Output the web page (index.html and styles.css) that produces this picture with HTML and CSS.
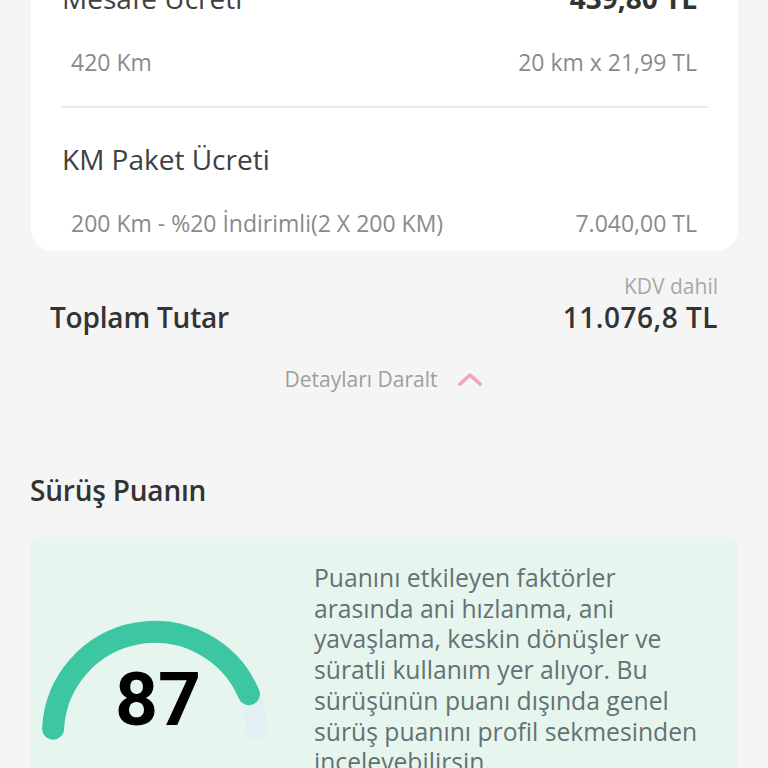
FILE: index.html
```html
<!DOCTYPE html>
<html lang="tr">
<head>
    <meta charset="UTF-8">
    <meta name="viewport" content="width=device-width, initial-scale=1.0">
    <title>Kiralama Özeti</title>
    <link rel="stylesheet" href="styles.css">
</head>
<body>
    <div class="page">
        <div class="fee-card">
            <div class="fee">
                <div class="fee-title">
                    <span>Mesafe Ücreti</span>
                    <span class="fee-amount">439,80 TL</span>
                </div>
                <div class="fee-sub">
                    <span>420 Km</span>
                    <span>20 km x 21,99 TL</span>
                </div>
            </div>
            <div class="fee-divider"></div>
            <div class="fee">
                <div class="fee-title">
                    <span>KM Paket Ücreti</span>
                </div>
                <div class="fee-sub">
                    <span>200 Km - %20 İndirimli(2 X 200 KM)</span>
                    <span>7.040,00 TL</span>
                </div>
            </div>
        </div>

        <div class="total">
            <div class="total-note">KDV dahil</div>
            <div class="total-row">
                <span>Toplam Tutar</span>
                <span class="total-amount">11.076,8 TL</span>
            </div>
        </div>

        <div class="collapse">
            <span>Detayları Daralt</span>
            <svg class="chevron" width="26" height="14" viewBox="0 0 26 14">
                <path d="M3 12 L13 3 L23 12" fill="none" stroke="#f2a3b6" stroke-width="3.5" stroke-linecap="round" stroke-linejoin="round"/>
            </svg>
        </div>

        <h2 class="section-title">Sürüş Puanın</h2>

        <div class="score-card">
            <svg class="gauge" width="284" height="232" viewBox="0 0 284 232">
                <path d="M23.1 191.7 A102 102 0 0 1 226.9 191.7" fill="none" stroke="#e3eff0" stroke-width="22" stroke-linecap="round"/>
                <path d="M23.1 191.7 A102 102 0 0 1 218.9 157.1" fill="none" stroke="#3cc6a2" stroke-width="22" stroke-linecap="round"/>
                <text x="128" y="188" text-anchor="middle" class="gauge-value">87</text>
            </svg>
            <p class="score-text">Puanını etkileyen faktörler arasında ani hızlanma, ani yavaşlama, keskin dönüşler ve süratli kullanım yer alıyor. Bu sürüşünün puanı dışında genel sürüş puanını profil sekmesinden incelevebilirsin.</p>
        </div>
    </div>
</body>
</html>
```

FILE: styles.css
```css
body {
    margin: 0;
    background-color: #f5f5f5;
    font-family: 'Open Sans', 'Noto Sans', sans-serif;
    color: #3a3a3a;
    height: 768px;
    overflow: hidden;
}
.page {
    padding: 0 30px;
}
.fee-card {
    background-color: #fff;
    border-radius: 0 0 22px 22px;
    margin: -53px 0 0 1px;
}
.fee {
    padding: 34px 30px 14px;
}
.fee-title {
    display: flex;
    justify-content: space-between;
    font-size: 28px;
    line-height: 34px;
    padding: 0 11px 0 1px;
    margin-bottom: 33px;
    color: #404040;
}
.fee-amount {
    font-weight: 700;
    color: #333;
}
.fee-sub {
    display: flex;
    justify-content: space-between;
    font-size: 23px;
    line-height: 28px;
    color: #8a8a8a;
    padding: 0 11px 0 10px;
}
.fee-divider {
    height: 2px;
    background-color: #e9ebeb;
    margin: 16px 30px 0;
}
.total {
    padding: 22px 20px 0;
}
.total-note {
    text-align: right;
    font-size: 21px;
    line-height: 26px;
    color: #a8a8a8;
}
.total-row {
    display: flex;
    justify-content: space-between;
    font-size: 28px;
    line-height: 36px;
    font-weight: 600;
    color: #333;
    letter-spacing: -0.2px;
}
.total-amount {
    letter-spacing: 0.5px;
}
.collapse {
    display: flex;
    justify-content: center;
    align-items: center;
    gap: 20px;
    margin-top: 31px;
    font-size: 21px;
    line-height: 26px;
    color: #9c9fa1;
}
.section-title {
    margin: 80px 0 0;
    font-size: 28px;
    line-height: 36px;
    font-weight: 600;
    color: #333;
    letter-spacing: -0.2px;
}
.score-card {
    display: flex;
    margin-top: 29px;
    background-color: #e6f6ef;
    border-radius: 8px;
    padding: 0 40px 0 0;
}
.gauge {
    flex: none;
    display: block;
}
.gauge-value {
    font-family: Roboto, 'Liberation Sans', sans-serif;
    font-weight: 700;
    font-size: 75px;
    fill: #000;
}
.score-text {
    margin: 26px 0 0;
    font-size: 24.7px;
    line-height: 30.7px;
    color: #637272;
}
```
